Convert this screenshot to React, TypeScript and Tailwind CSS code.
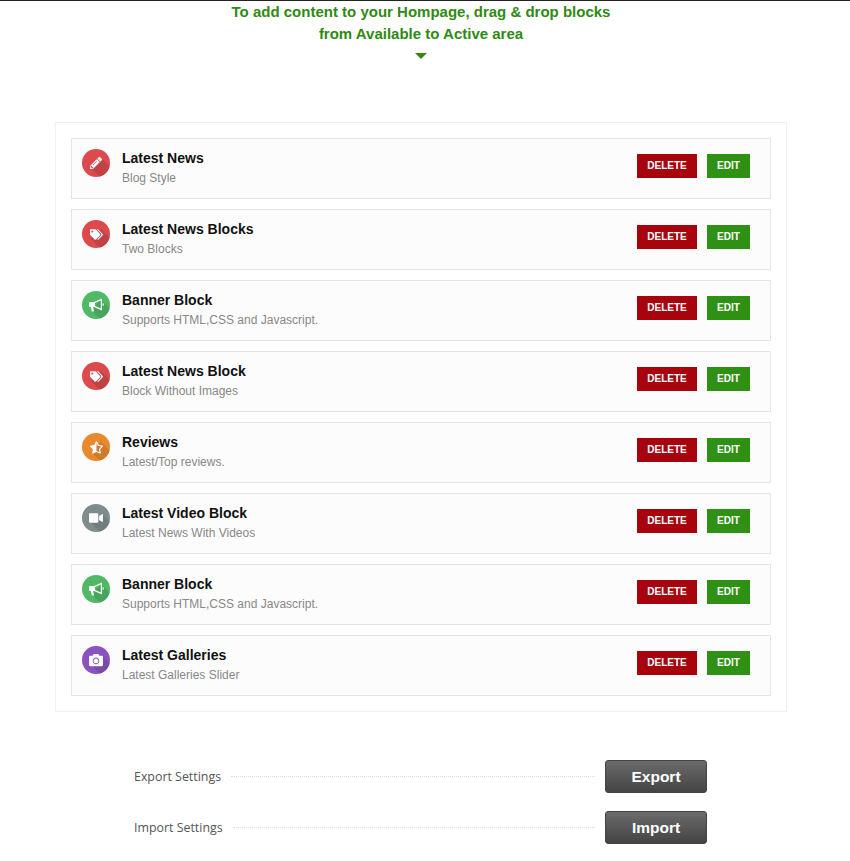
import { FaCamera, FaPencilAlt, FaStarHalfAlt, FaTags, FaVideo } from "react-icons/fa";
import type { ComponentType } from "react";

type Glyph = ComponentType<{ className?: string }>;

type Block = {
  title: string;
  sub: string;
  icon: Glyph;
  tone: string;
  shade: string;
  size: string;
};

// react-icons' bullhorn has a filled cone, the picture has a hollow one
function HollowBullhorn({ className }: { className?: string }) {
  return (
    <svg viewBox="0 0 16 14" width="16" height="14" fill="currentColor" className={className}>
      <path
        fillRule="evenodd"
        d="M14 .6 6 4H2a1 1 0 0 0-1 1v3a1 1 0 0 0 1 1h.8l1 4.4h2.3l-1-4.4H6l8 3.4zM12.8 2.5 7 4.9v3.2l5.8 2.4z"
      />
      <path d="M14.6 4.8c.8.2 1.2.9 1.2 1.7s-.4 1.5-1.2 1.7z" />
    </svg>
  );
}

const news = { icon: FaTags, tone: "bg-[#dc4a4d]", shade: "bg-[#c24144]", size: "text-[13px]" };
const banner = { icon: HollowBullhorn, tone: "bg-[#4fb966]", shade: "bg-[#46a55b]", size: "" };

const blocks: Block[] = [
  { title: "Latest News", sub: "Blog Style", icon: FaPencilAlt, tone: "bg-[#dc4a4d]", shade: "bg-[#c24144]", size: "text-[12px]" },
  { title: "Latest News Blocks", sub: "Two Blocks", ...news },
  { title: "Banner Block", sub: "Supports HTML,CSS and Javascript.", ...banner },
  { title: "Latest News Block", sub: "Block Without Images", ...news },
  { title: "Reviews", sub: "Latest/Top reviews.", icon: FaStarHalfAlt, tone: "bg-[#e8892f]", shade: "bg-[#cf7a2a]", size: "text-[13px]" },
  { title: "Latest Video Block", sub: "Latest News With Videos", icon: FaVideo, tone: "bg-[#7f8c8d]", shade: "bg-[#717d7e]", size: "text-[14px]" },
  { title: "Banner Block", sub: "Supports HTML,CSS and Javascript.", ...banner },
  { title: "Latest Galleries", sub: "Latest Galleries Slider", icon: FaCamera, tone: "bg-[#8a52bf]", shade: "bg-[#7b49aa]", size: "text-[14px]" },
];

function BlockRow({ block }: { block: Block }) {
  const Icon = block.icon;
  return (
    <div className="flex h-[61px] items-start border border-[#e5e5e5] bg-[#fcfcfc] pl-[10px] pr-5">
      <div className={`relative mt-[10px] flex h-7 w-7 shrink-0 items-center justify-center overflow-hidden rounded-full ${block.tone}`}>
        {/* long shadow running out of the glyph */}
        <div className={`absolute left-[14px] top-[7px] h-[14px] w-8 origin-left rotate-45 ${block.shade}`} />
        <Icon className={`relative text-white ${block.size}`} />
      </div>
      <div className="ml-3 min-w-0 flex-1 pt-[10px]">
        <div className="text-[14px] font-bold leading-[18px] text-[#111]">{block.title}</div>
        <div className="mt-[2px] text-[12px] leading-[18px] text-[#888]">{block.sub}</div>
      </div>
      <div className="mt-[15px] flex gap-[10px]">
        <button className="flex h-6 w-[60px] items-center justify-center bg-[#a8040d] pb-px text-[10px] font-bold text-white">DELETE</button>
        <button className="flex h-6 w-[43px] items-center justify-center bg-[#2f9114] pb-px text-[10px] font-bold text-white">EDIT</button>
      </div>
    </div>
  );
}

function SettingRow({ label, action }: { label: string; action: string }) {
  return (
    <div className="flex h-[33px] items-center">
      <span className="ml-[134px] pt-px font-['Open_Sans',sans-serif] text-[12.4px] text-[#555]">{label}</span>
      <div className="ml-[10px] h-0 flex-1 border-t border-dotted border-[#ddd]" />
      <button className="ml-[10px] mr-[143px] h-[33px] w-[102px] rounded-[3px] border border-[#444] bg-gradient-to-b from-[#6b6b6b] to-[#444] text-[15.5px] font-bold text-white">
        {action}
      </button>
    </div>
  );
}

export default function App() {
  return (
    <div className="min-h-[861px] bg-white font-['Liberation_Sans',Arial,sans-serif]">
      <div className="h-px bg-[#222]" />
      <div className="flex flex-col items-center pr-2 text-center">
        <p className="text-[15px] font-bold leading-[22px] text-[#2f8a12]">To add content to your Hompage, drag &amp; drop blocks</p>
        <p className="text-[15px] font-bold leading-[22px] text-[#2f8a12]">from Available to Active area</p>
        <div className="mt-2 h-0 w-0 border-x-[6px] border-t-[6px] border-x-transparent border-t-[#2f8a12]" />
      </div>
      <div className="mx-[55px] mt-[63px] flex w-[732px] flex-col gap-[10px] border border-[#f0f0f0] bg-white p-[15px]">
        {blocks.map((b, i) => (
          <BlockRow key={i} block={b} />
        ))}
      </div>
      <div className="mt-[48px] flex flex-col gap-[18px]">
        <SettingRow label="Export Settings" action="Export" />
        <SettingRow label="Import Settings" action="Import" />
      </div>
    </div>
  );
}
